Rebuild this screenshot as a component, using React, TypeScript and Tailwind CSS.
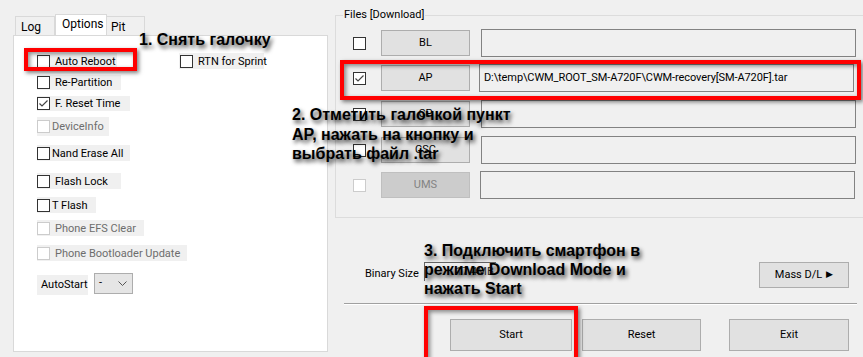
import React from "react";

const UI = "font-['Roboto','Liberation_Sans',sans-serif] text-[11px]";

function Box({ checked = false, disabled = false }: { checked?: boolean; disabled?: boolean }) {
  return (
    <span
      className={`relative inline-block w-[13px] h-[13px] shrink-0 border ${
        disabled ? "border-[#cccccc] bg-[#ffffff]" : "border-[#333333] bg-white"
      }`}
    >
      {checked && (
        <svg className="absolute left-0 top-0" width="11" height="11" viewBox="0 0 11 11">
          <path d="M1.5 5.5 L4 8 L9.5 2.5" fill="none" stroke="#444" strokeWidth="1.2" />
        </svg>
      )}
    </span>
  );
}

function Item({
  label,
  checked,
  disabled,
  w,
  h = 16,
  gap = 5,
  className = "",
}: {
  label: string;
  checked?: boolean;
  disabled?: boolean;
  w: string;
  h?: number;
  gap?: number;
  className?: string;
}) {
  return (
    <div
      className={`flex items-center bg-[#f0f0f0] ${w} ${h === 15 ? "h-[15px]" : h === 19 ? "h-[19px]" : "h-[16px]"} ${className}`}
    >
      <Box checked={checked} disabled={disabled} />
      <span
        className={`${gap === 5 ? "ml-[5px]" : "ml-[2px]"} whitespace-nowrap leading-none ${
          disabled ? "text-[#6d6d6d]" : "text-black"
        }`}
      >
        {label}
      </span>
    </div>
  );
}

function Btn({
  children,
  w,
  h = "h-[26px]",
  disabled = false,
}: {
  children: React.ReactNode;
  w: string;
  h?: string;
  disabled?: boolean;
}) {
  return (
    <div
      className={`${w} ${h} flex items-center justify-center border ${
        disabled ? "bg-[#cccccc] border-[#bfbfbf] text-[#838383]" : "bg-[#e1e1e1] border-[#adadad] text-black"
      }`}
    >
      {children}
    </div>
  );
}

function Field({ text = "", w = "w-[375px]" }: { text?: string; w?: string }) {
  return (
    <div className={`${w} h-[28px] border border-[#828282] bg-[#f0f0f0] flex items-start pt-[5px] pl-[4px] whitespace-nowrap tracking-[-0.1px]`}>
      {text}
    </div>
  );
}

function FileRow({
  label,
  checked,
  disabled,
  text,
  mt,
  fieldMl = "ml-[11px]",
}: {
  label: string;
  checked?: boolean;
  disabled?: boolean;
  text?: string;
  mt: string;
  fieldMl?: string;
}) {
  return (
    <div className={`flex items-center h-[28px] ${mt}`}>
      <div className={`w-[45px] pl-[17px] flex ${disabled ? "pl-[15px]" : ""}`}>
        <Box checked={checked} disabled={disabled} />
      </div>
      <Btn w="w-[89px]" disabled={disabled}>
        {label}
      </Btn>
      <div className={fieldMl}>
        <Field text={text} />
      </div>
    </div>
  );
}

const shadowText = "[text-shadow:2px_3px_4px_rgba(0,0,0,0.75)]";
const redBox =
  "absolute border-4 border-[#ff0000] shadow-[2px_2px_4px_rgba(0,0,0,0.5),inset_2px_2px_4px_rgba(0,0,0,0.45)]";

export default function App() {
  return (
    <div className={`relative w-[863px] h-[357px] overflow-hidden bg-[#f0f0f0] ${UI}`}>
      <div className="flex">
        {/* Left: tabs */}
        <div className="flex flex-col pl-[13px] pt-[14px] w-[335px]">
          <div className="flex items-end h-[21px] pl-[2px] text-[12px]">
            <div className="w-[40px] h-[19px] border border-b-0 border-[#d9d9d9] bg-[#f0f0f0] pl-[5px] pt-[3px] leading-[14px]">
              Log
            </div>
            <div className="w-[52px] h-[21px] border border-b-0 border-[#d9d9d9] bg-white pl-[6px] pt-[2px] leading-[14px]">
              Options
            </div>
            <div className="w-[38px] h-[19px] border border-b-0 border-l-0 border-[#d9d9d9] bg-[#f0f0f0] pl-[4px] pt-[3px] leading-[14px]">
              Pit
            </div>
          </div>
          <div className="w-[315px] h-[317px] border border-[#d9d9d9] bg-white pl-[23px] pt-[17px] flex flex-col items-start">
            <div className="flex items-start">
              <Item label="Auto Reboot" w="w-[80px]" />
              <Item label="RTN for Sprint" w="w-[85px]" className="ml-[62px] pl-[1px]" />
            </div>
            <Item label="Re-Partition" w="w-[84px]" h={15} className="mt-[6px]" />
            <Item label="F. Reset Time" checked w="w-[93px]" h={15} className="mt-[6px]" />
            <Item label="DeviceInfo" disabled w="w-[72px]" h={19} gap={2} className="mt-[6px]" />
            <Item label="Nand Erase All" w="w-[93px]" gap={2} className="mt-[9px]" />
            <Item label="Flash Lock" w="w-[84px]" className="mt-[12px]" />
            <Item label="T Flash" w="w-[59px]" gap={2} className="mt-[8px]" />
            <Item label="Phone EFS Clear" disabled w="w-[107px]" className="mt-[7px]" />
            <Item label="Phone Bootloader Update" disabled w="w-[150px]" className="mt-[9px]" />
            <div className="flex items-center mt-[11px]">
              <div className="w-[51px] h-[20px] bg-[#f0f0f0] flex items-center pl-[4px] mt-[3px]">AutoStart</div>
              <div className="ml-[6px] w-[39px] h-[21px] border border-[#adadad] bg-[#e5e5e5] flex items-center justify-between pl-[4px] pr-[5px]">
                <span>-</span>
                <svg width="9" height="6" viewBox="0 0 9 6">
                  <path d="M0.5 0.5 L4.5 4.5 L8.5 0.5" fill="none" stroke="#555" strokeWidth="1" />
                </svg>
              </div>
            </div>
          </div>
        </div>

        {/* Right */}
        <div className="flex flex-col flex-1">
          <div className="relative mt-[15px] h-[203px] border-t border-l border-b border-[#dcdcdc]">
            <div className="absolute -top-[8px] left-[7px] bg-[#f0f0f0] px-[1px] leading-[14px]">Files [Download]</div>
            <FileRow label="BL" mt="mt-[13px]" />
            <FileRow label="AP" checked mt="mt-[7px]" fieldMl="ml-[9px]" text="D:\temp\CWM_ROOT_SM-A720F\CWM-recovery[SM-A720F].tar" />
            <FileRow label="CP" mt="mt-[8px]" />
            <FileRow label="CSC" mt="mt-[8px]" />
            <FileRow label="UMS" disabled mt="mt-[7px]" fieldMl="ml-[10px]" />
          </div>

          <div className="flex items-start mt-[44px] h-[26px]">
            <span className="ml-[30px] mt-[5px] leading-[14px]">Binary Size</span>
            <div className="ml-[5px] w-[72px] h-[19px] border-t border-l border-[#646464] bg-[#f0f0f0] flex items-center justify-end pr-[2px] text-[#333]">
              17.4MB
            </div>
            <div className="ml-auto mr-[14px]">
              <Btn w="w-[90px]">
                <span>Mass D/L</span>
                <span className="ml-[4px] text-[9px]">▶</span>
              </Btn>
            </div>
          </div>

          <div className="ml-[9px] mr-[6px] mt-[15px] h-[2px] border-t border-[#a0a0a0] border-b border-b-white" />

          <div className="flex mt-[14px]">
            <div className="ml-[115px]">
              <Btn w="w-[122px]" h="h-[32px]">Start</Btn>
            </div>
            <div className="ml-[10px]">
              <Btn w="w-[119px]" h="h-[32px]">Reset</Btn>
            </div>
            <div className="ml-[28px]">
              <Btn w="w-[120px]" h="h-[32px]">Exit</Btn>
            </div>
          </div>
        </div>
      </div>

      {/* Annotations overlay */}
      <div className={redBox + " left-[24px] top-[48px] w-[113px] h-[23px]"} />
      <div className={redBox + " left-[340px] top-[60px] w-[521px] h-[40px]"} />
      <div className={redBox + " left-[424px] top-[306px] w-[154px] h-[60px]"} />

      <div
        className={`absolute left-[139px] top-[30px] font-['Liberation_Sans',Arial,sans-serif] font-bold text-[16px] leading-[19px] text-black whitespace-nowrap ${shadowText}`}
      >
        1. Снять галочку
      </div>
      <div
        className={`absolute left-[292px] top-[105px] font-['Liberation_Sans',Arial,sans-serif] font-bold text-[16px] leading-[19.5px] text-black whitespace-nowrap ${shadowText}`}
      >
        2. Отметить галочкой пункт
        <br />
        AP, нажать на кнопку и
        <br />
        выбрать файл .tar
      </div>
      <div
        className={`absolute left-[424px] top-[241px] font-['Liberation_Sans',Arial,sans-serif] font-bold text-[16px] leading-[19px] text-black whitespace-nowrap ${shadowText}`}
      >
        3. Подключить смартфон в
        <br />
        режиме Download Mode и
        <br />
        нажать Start
      </div>
    </div>
  );
}
